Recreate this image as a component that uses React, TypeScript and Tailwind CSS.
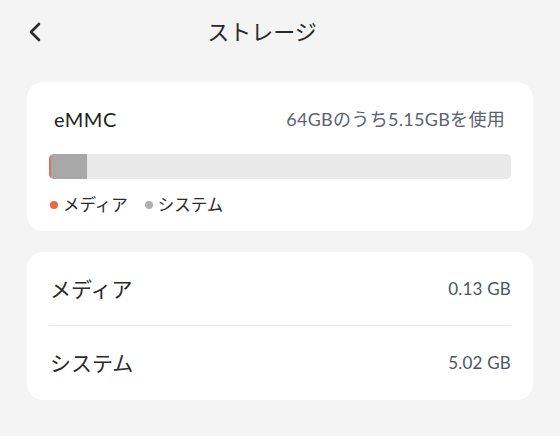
import React from "react";

const font = { fontFamily: '"Lato", "Noto Sans CJK JP", sans-serif' };

export default function App() {
  return (
    <div className="w-[560px] h-[436px] bg-[#f4f4f4] text-[#222222] overflow-hidden" style={font}>
      <div className="relative h-[62px] flex items-center justify-center pr-[36px]">
        <svg className="absolute left-[28px] top-[22px]" width="14" height="20" viewBox="0 0 14 20">
          <path d="M11 2 L3 10 L11 18" fill="none" stroke="#2a2a2a" strokeWidth="2.6" strokeLinecap="round" strokeLinejoin="round" />
        </svg>
        <div className="text-[22px] leading-none pt-[2px] text-[#2a2a2a]">ストレージ</div>
      </div>

      <div className="mx-[27px] mt-[20px] bg-white rounded-[16px] pt-[24px] pb-[13px] px-[22px]">
        <div className="flex items-center justify-between h-[26px]">
          <span className="text-[20px] pl-[5px] tracking-[0.5px] text-[#222222]">eMMC</span>
          <span className="text-[18px] tracking-[0.3px] text-[#5b6270] pr-[6px]">64GBのうち5.15GBを使用</span>
        </div>
        <div className="mt-[22px] h-[25px] bg-[#e9e9e9] rounded-[5px] overflow-hidden flex">
          <div className="w-[2px] bg-[#e0705c]" />
          <div className="w-[36px] bg-[#a8a8a8]" />
        </div>
        <div className="mt-[14px] flex items-center text-[16.5px] text-[#2a2a2a]">
          <span className="w-[8px] h-[8px] rounded-full bg-[#ee6647] ml-[1px] mr-[5px]" />
          <span>メディア</span>
          <span className="w-[8px] h-[8px] rounded-full bg-[#b0b0b0] ml-[17px] mr-[5px]" />
          <span>システム</span>
        </div>
      </div>

      <div className="mx-[27px] mt-[21px] bg-white rounded-[16px] px-[22px]">
        <div className="h-[74px] flex items-center justify-between border-b border-[#e6e6e6]">
          <span className="text-[21px] text-[#2a2a2a] pl-[1px]">メディア</span>
          <span className="text-[17px] tracking-[0.2px] text-[#4d5562]">0.13 GB</span>
        </div>
        <div className="h-[74px] flex items-center justify-between">
          <span className="text-[21px] text-[#2a2a2a] pl-[1px]">システム</span>
          <span className="text-[17px] tracking-[0.2px] text-[#4d5562]">5.02 GB</span>
        </div>
      </div>
    </div>
  );
}
